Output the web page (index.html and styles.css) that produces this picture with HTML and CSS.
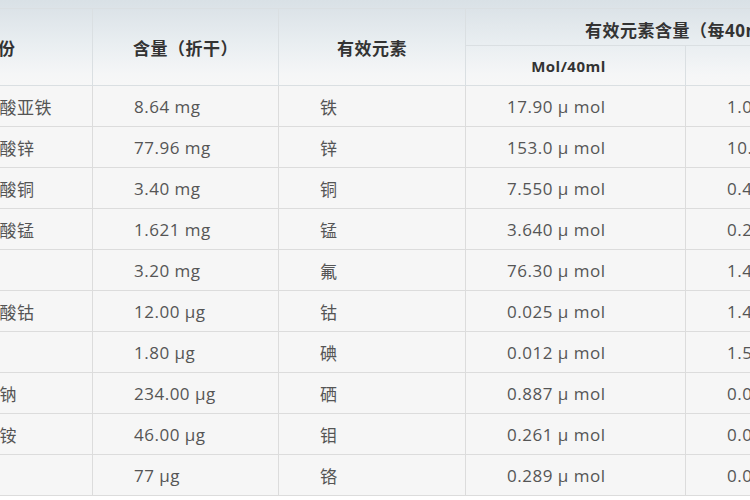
FILE: index.html
```html
<!DOCTYPE html>
<html lang="zh-CN">
<head>
<meta charset="utf-8">
<link rel="stylesheet" href="styles.css">
</head>
<body>
<div class="viewport">
  <table class="grid">
    <colgroup>
      <col class="c1"><col class="c2"><col class="c3"><col class="c4"><col class="c5">
    </colgroup>
    <thead>
      <tr class="h1">
        <th rowspan="2" class="name">成份</th>
        <th rowspan="2">含量（折干）</th>
        <th rowspan="2">有效元素</th>
        <th colspan="2" class="group">有效元素含量（每40ml）</th>
      </tr>
      <tr class="h2">
        <th class="sub mol">Mol/40ml</th>
        <th class="sub">mg/40ml</th>
      </tr>
    </thead>
    <tbody>
      <tr><td>葡萄糖酸亚铁</td><td>8.64 mg</td><td>铁</td><td>17.90 μ mol</td><td>1.00 mg</td></tr>
      <tr><td>葡萄糖酸锌</td><td>77.96 mg</td><td>锌</td><td>153.0 μ mol</td><td>10.0 mg</td></tr>
      <tr><td>葡萄糖酸铜</td><td>3.40 mg</td><td>铜</td><td>7.550 μ mol</td><td>0.48 mg</td></tr>
      <tr><td>葡萄糖酸锰</td><td>1.621 mg</td><td>锰</td><td>3.640 μ mol</td><td>0.20 mg</td></tr>
      <tr><td>氟化钠</td><td>3.20 mg</td><td>氟</td><td>76.30 μ mol</td><td>1.45 mg</td></tr>
      <tr><td>葡萄糖酸钴</td><td>12.00 μg</td><td>钴</td><td>0.025 μ mol</td><td>1.47 μg</td></tr>
      <tr><td>碘化钾</td><td>1.80 μg</td><td>碘</td><td>0.012 μ mol</td><td>1.52 μg</td></tr>
      <tr><td>亚硒酸钠</td><td>234.00 μg</td><td>硒</td><td>0.887 μ mol</td><td>0.07 mg</td></tr>
      <tr><td>仲钼酸铵</td><td>46.00 μg</td><td>钼</td><td>0.261 μ mol</td><td>0.03 mg</td></tr>
      <tr><td>氯化铬</td><td>77 μg</td><td>铬</td><td>0.289 μ mol</td><td>0.02 mg</td></tr>
    </tbody>
  </table>
</div>
</body>
</html>
```

FILE: styles.css
```css
html, body {
  margin: 0;
  padding: 0;
  background: #ffffff;
}
.viewport {
  width: 750px;
  height: 500px;
  overflow: hidden;
  padding-top: 8px;
  box-sizing: border-box;
  background: linear-gradient(#d9e1e6 0px, #dce3e8 8px, #ffffff 12px);
}
.grid {
  margin-left: -89px;
  border-collapse: collapse;
  table-layout: fixed;
  width: 994px;
  font-family: "Open Sans", "Noto Sans CJK SC", sans-serif;
  font-size: 17px;
  letter-spacing: 0.5px;
  color: #555555;
}
.c1 { width: 181px; }
.c2 { width: 186px; }
.c3 { width: 187px; }
.c4 { width: 220px; }
.c5 { width: 220px; }
thead {
  background: linear-gradient(#dce3e8, #e9eef1 45%, #f5f6f7 85%, #f7f7f7);
}
th {
  font-weight: bold;
  color: #333;
  border: 1px solid #dadfe2;
  padding: 0;
  font-size: 17px;
  text-align: center;
}
th.name { padding-right: 8px; }
.h1 th { height: 36px; }
.h1 th.group { height: 32px; padding-top: 4px; }
.h2 th { height: 39px; }
th.sub { font-size: 15px; }
th.mol { padding-right: 14px; }
td {
  height: 40px;
  padding: 0 0 0 41px;
  border: 1px solid #dcdcdc;
  background: #f6f6f6;
  white-space: nowrap;
}
td:first-child { padding-left: 35px; }
```
